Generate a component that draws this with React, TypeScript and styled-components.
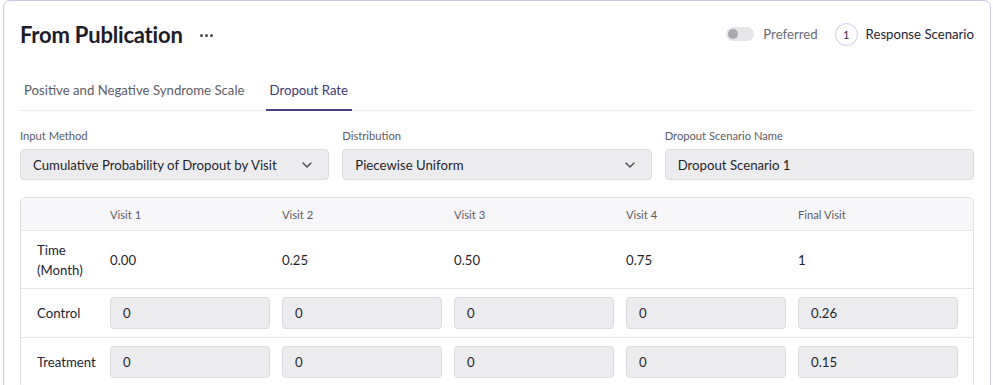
import { createGlobalStyle, styled } from "styled-components";

const Global = createGlobalStyle`
    body {
        margin: 0;
        background: #ffffff;
        font-family: Lato, "Open Sans", sans-serif;
        color: #1f1f2b;
    }
`

const visits = ["Visit 1", "Visit 2", "Visit 3", "Visit 4", "Final Visit"];
const times = ["0.00", "0.25", "0.50", "0.75", "1"];
const control = ["0", "0", "0", "0", "0.26"];
const treatment = ["0", "0", "0", "0", "0.15"];

function Chevron() {
    return (
        <svg width="12" height="12" viewBox="0 0 12 12" fill="none">
            <path d="M2 4l4 4 4-4" stroke="#444" strokeWidth="1.3" strokeLinecap="round" strokeLinejoin="round" />
        </svg>
    )
}

function App() {
    return (
        <>
            <Global />
            <Page>
                <Card>
                    <Header>
                        <TitleWrap>
                            <Title>From Publication</Title>
                            <Dots>
                                <i /><i /><i />
                            </Dots>
                        </TitleWrap>
                        <Actions>
                            <Toggle><Knob /></Toggle>
                            <Muted>Preferred</Muted>
                            <Badge>1</Badge>
                            <span>Response Scenario</span>
                        </Actions>
                    </Header>

                    <Tabs>
                        <Tab>Positive and Negative Syndrome Scale</Tab>
                        <Tab $active>Dropout Rate</Tab>
                    </Tabs>

                    <Fields>
                        <Field>
                            <Label>Input Method</Label>
                            <Select>
                                <span>Cumulative Probability of Dropout by Visit</span>
                                <Chevron />
                            </Select>
                        </Field>
                        <Field>
                            <Label>Distribution</Label>
                            <Select>
                                <span>Piecewise Uniform</span>
                                <Chevron />
                            </Select>
                        </Field>
                        <Field>
                            <Label>Dropout Scenario Name</Label>
                            <Select>
                                <span>Dropout Scenario 1</span>
                            </Select>
                        </Field>
                    </Fields>

                    <Table>
                        <Row $head>
                            <span />
                            {visits.map((v) => <HeadCell key={v}>{v}</HeadCell>)}
                        </Row>
                        <Row $tall>
                            <RowLabel>Time<br />(Month)</RowLabel>
                            {times.map((t, i) => <span key={i}>{t}</span>)}
                        </Row>
                        <Row>
                            <RowLabel>Control</RowLabel>
                            {control.map((c, i) => <Cell key={i}>{c}</Cell>)}
                        </Row>
                        <Row>
                            <RowLabel>Treatment</RowLabel>
                            {treatment.map((c, i) => <Cell key={i}>{c}</Cell>)}
                        </Row>
                    </Table>
                </Card>
            </Page>
        </>
    )
}

const Page = styled.div`
    padding: 0 2px 0 3px;
    height: 385px;
    overflow: hidden;
`

const Card = styled.div`
    border: 1px solid #cbc5e8;
    border-radius: 7px;
    padding: 0 16px 40px 16px;
    min-height: 420px;
`

const Header = styled.div`
    display: flex;
    align-items: center;
    justify-content: space-between;
    height: 66px;
    padding-bottom: 4px;
`

const TitleWrap = styled.div`
    display: flex;
    align-items: center;
    gap: 17px;
`

const Title = styled.h1`
    margin: 0;
    font-size: 22px;
    font-weight: 700;
    color: #1c1c28;
    letter-spacing: -0.2px;
`

const Dots = styled.div`
    display: flex;
    gap: 2px;
    padding-top: 2px;
    i {
        width: 3px;
        height: 3px;
        border-radius: 50%;
        background: #4a4a55;
    }
`

const Actions = styled.div`
    display: flex;
    align-items: center;
    font-size: 13.2px;
    color: #23232f;
`

const Toggle = styled.div`
    width: 28px;
    height: 14px;
    border-radius: 7px;
    background: #e6e6e8;
    display: flex;
    align-items: center;
    padding: 0 2px;
    box-sizing: border-box;
    margin-right: 9px;
`

const Knob = styled.div`
    width: 10px;
    height: 10px;
    border-radius: 50%;
    background: #a8a8ac;
`

const Muted = styled.span`
    color: #6a6a74;
    margin-right: 17px;
`

const Badge = styled.span`
    width: 21px;
    height: 21px;
    border-radius: 50%;
    border: 1px solid #cfc8ec;
    display: flex;
    align-items: center;
    justify-content: center;
    font-size: 11px;
    color: #2a2a40;
    margin-right: 8px;
`

const Tabs = styled.div`
    display: flex;
    gap: 17px;
    border-bottom: 1px solid #ececf0;
`

const Tab = styled.div<{ $active?: boolean }>`
    font-size: 13.2px;
    padding: 11px 4px 11px 4px;
    color: ${(p) => (p.$active ? "#3e3878" : "#5c5c66")};
    border-bottom: 2px solid ${(p) => (p.$active ? "#4b418e" : "transparent")};
    margin-bottom: -1px;
`

const Fields = styled.div`
    display: grid;
    grid-template-columns: repeat(3, 1fr);
    gap: 13px;
    margin-top: 18px;
`

const Field = styled.div`
    display: flex;
    flex-direction: column;
    gap: 7px;
`

const Label = styled.div`
    font-size: 11.2px;
    color: #5a5a64;
`

const Select = styled.div`
    height: 31px;
    box-sizing: border-box;
    border: 1px solid #dcdce0;
    border-radius: 4px;
    background: #ececee;
    display: flex;
    align-items: center;
    justify-content: space-between;
    padding: 0 15px 0 12px;
    font-size: 13.2px;
    color: #1f1f2b;
`

const Table = styled.div`
    margin-top: 17px;
    border: 1px solid #e2e2e6;
    border-radius: 5px;
`

const Row = styled.div<{ $head?: boolean; $tall?: boolean }>`
    display: grid;
    grid-template-columns: 61px repeat(5, 1fr);
    column-gap: 12px;
    align-items: center;
    padding: 0 15px 0 16px;
    height: ${(p) => (p.$head ? "32px" : p.$tall ? "57px" : "48px")};
    background: ${(p) => (p.$head ? "#f7f7f9" : "#ffffff")};
    border-bottom: 1px solid #e6e6ea;
    border-radius: ${(p) => (p.$head ? "5px 5px 0 0" : "0")};
    font-size: 13.2px;
    color: #1f1f2b;
`

const HeadCell = styled.span`
    font-size: 11.2px;
    color: #5a5a64;
`

const RowLabel = styled.span`
    font-size: 13.2px;
    line-height: 20px;
    color: #23232f;
`

const Cell = styled.div`
    height: 32px;
    box-sizing: border-box;
    border: 1px solid #dcdce0;
    border-radius: 4px;
    background: #ececee;
    display: flex;
    align-items: center;
    padding: 0 12px;
    font-size: 13.2px;
`

export default App
